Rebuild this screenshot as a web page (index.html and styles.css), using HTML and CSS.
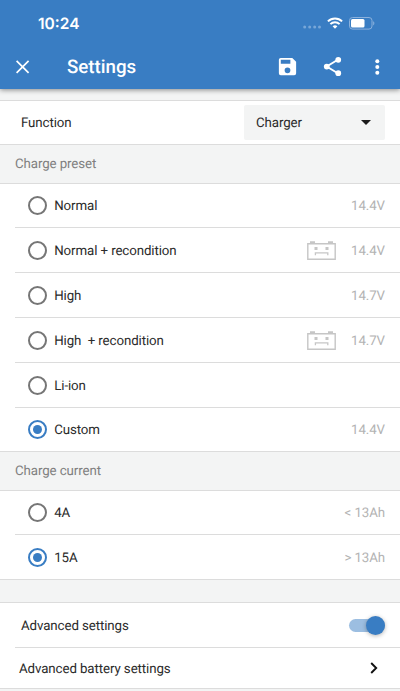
FILE: index.html
```html
<!DOCTYPE html>
<html lang="en">
<head>
<meta charset="utf-8">
<title>Settings</title>
<link rel="stylesheet" href="styles.css">
</head>
<body>
<header class="header">
  <div class="status">
    <span class="time">10:24</span>
    <svg class="signal" width="18" height="4" viewBox="0 0 18 4"><g fill="#78a7d8"><circle cx="1.7" cy="2" r="1.5"/><circle cx="6.7" cy="2" r="1.5"/><circle cx="11.7" cy="2" r="1.5"/><circle cx="16.5" cy="2" r="1.5"/></g></svg>
    <svg class="wifi" width="16" height="12" viewBox="0 0 16 12"><g fill="none" stroke="#fff" stroke-width="2"><path d="M.9 4.4a10.2 10.2 0 0 1 14.2 0"/><path d="M3.4 7.1a6.6 6.6 0 0 1 9.2 0"/></g><path d="M5.6 9.3a3.5 3.5 0 0 1 4.8 0L8 11.8z" fill="#fff"/></svg>
    <svg class="battery" width="26" height="13" viewBox="0 0 26 13"><rect x=".5" y=".5" width="22.5" height="11.6" rx="3" fill="none" stroke="#8bb1dc"/><rect x="2" y="2" width="13.5" height="8.6" rx="1.5" fill="#fff"/><path d="M24.2 4.2c1.6.7 1.6 3.5 0 4.2z" fill="#8bb1dc"/></svg>
  </div>
  <div class="toolbar">
    <svg class="close" width="14" height="14" viewBox="0 0 14 14"><path d="M.6 .8l12 12M12.600 .8l-12 12" stroke="#fff" stroke-width="1.7"/></svg>
    <h1 class="title">Settings</h1>
    <svg class="save" width="23" height="23" viewBox="0 0 24 24"><path fill="#fff" d="M17 3H5a2 2 0 0 0-2 2v14a2 2 0 0 0 2 2h14a2 2 0 0 0 2-2V7l-4-4zm-5 16a3 3 0 1 1 0-6 3 3 0 0 1 0 6zm3-10H5V5h10v4z"/></svg>
    <svg class="share" width="23" height="23" viewBox="0 0 24 24"><path d="M17.500 5L6 12l11.500 7" fill="none" stroke="#fff" stroke-width="2"/><g fill="#fff"><circle cx="18" cy="5" r="3"/><circle cx="6" cy="12" r="3"/><circle cx="18" cy="19" r="3"/></g></svg>
    <svg class="more" width="6" height="18" viewBox="0 0 6 18"><g fill="#fff"><circle cx="3.300" cy="3.300" r="2"/><circle cx="3.300" cy="9" r="2"/><circle cx="3.300" cy="14.700" r="2"/></g></svg>
  </div>
</header>
<main>
  <div class="row function"><span class="label">Function</span><div class="select"><span>Charger</span><svg width="10" height="5" viewBox="0 0 10 5"><path d="M0 0h10L5 5z" fill="#1b1b1b"/></svg></div></div>
  <h2 class="section">Charge preset</h2>
  <div class="list">
    <div class="row option first"><i class="radio"></i><span class="label">Normal</span><span class="value">14.4V</span></div>
    <div class="row option"><i class="radio"></i><span class="label">Normal + recondition</span><svg class="sad" width="29" height="19" viewBox="0 0 29 19"><g fill="none" stroke="#c6c6c6"><path stroke-width="1.4" d="M.8 2.700h27.400v15.500H.8z"/><path stroke-width="1.3" d="M8.400 14.200v-2.400h12.400v2.400"/></g><path fill="#c6c6c6" d="M3 .2h5v2H3zM21 .2h5v2h-5zM7.500 6h3v3h-3zM18.500 6h3v3h-3z"/></svg><span class="value">14.4V</span></div>
    <div class="row option"><i class="radio"></i><span class="label">High</span><span class="value">14.7V</span></div>
    <div class="row option"><i class="radio"></i><span class="label">High&nbsp; + recondition</span><svg class="sad" width="29" height="19" viewBox="0 0 29 19"><g fill="none" stroke="#c6c6c6"><path stroke-width="1.4" d="M.8 2.700h27.400v15.500H.8z"/><path stroke-width="1.3" d="M8.400 14.200v-2.400h12.400v2.400"/></g><path fill="#c6c6c6" d="M3 .2h5v2H3zM21 .2h5v2h-5zM7.500 6h3v3h-3zM18.500 6h3v3h-3z"/></svg><span class="value">14.7V</span></div>
    <div class="row option"><i class="radio"></i><span class="label">Li-ion</span></div>
    <div class="row option last"><i class="radio checked"></i><span class="label">Custom</span><span class="value">14.4V</span></div>
  </div>
  <h2 class="section">Charge current</h2>
  <div class="list">
    <div class="row option first"><i class="radio"></i><span class="label">4A</span><span class="value">&lt; 13Ah</span></div>
    <div class="row option"><i class="radio checked"></i><span class="label">15A</span><span class="value">&gt; 13Ah</span></div>
  </div>
  <div class="spacer"></div>
  <div class="list">
    <div class="row advanced first"><span class="label">Advanced settings</span><span class="switch"><i class="knob"></i></span></div>
    <div class="row link"><span class="label">Advanced battery settings</span><svg width="8" height="12" viewBox="0 0 8 12"><path d="M1.200 1L6.200 6l-5 5" fill="none" stroke="#111" stroke-width="1.9"/></svg></div>
  </div>
  <div class="end"></div>
</main>
</body>
</html>
```
FILE: styles.css
```css
* { box-sizing: border-box; }
body {
  margin: 0;
  height: 691px;
  overflow: hidden;
  background: #f3f4f4;
  color: #2b2b2b;
  font: 13.3px/18px Roboto, sans-serif;
  letter-spacing: -.1px;
  text-rendering: geometricPrecision;
}
svg { display: block; flex: none; }
.header {
  height: 89px;
  background: #397dc3;
  color: #fff;
  box-shadow: 0 1px 5px rgba(0, 0, 0, .45);
}
.status {
  display: flex;
  align-items: center;
  height: 46px;
  padding: 0 25px 0 38px;
}
.time {
  flex: 1;
  padding-top: 1px;
  font: 600 15.5px/20px Inter, sans-serif;
  letter-spacing: 0;
}
.signal { margin: 8px 6px 0 0; }
.wifi { margin-right: 6px; }
.toolbar {
  display: flex;
  align-items: center;
  height: 41px;
  padding: 0 20px 0 16px;
}
.title {
  flex: 1;
  margin: 0 0 0 37px;
  font-size: 18.7px;
  line-height: 24px;
  font-weight: 500;
  letter-spacing: 0;
}
.save { margin-right: 22px; }
.share { margin-right: 30px; }
main { padding-top: 11px; }
.row {
  display: flex;
  align-items: center;
  height: 45px;
  border-top: 1px solid #dcdcdc;
  background: #fff;
}
.label { flex: 1; white-space: pre; }
.label, .value { padding-top: 3px; }
.function { height: 44px; padding: 0 15px 0 21px; }
.select {
  display: flex;
  align-items: center;
  justify-content: space-between;
  width: 141px;
  height: 35px;
  padding: 0 14px 0 12px;
  border-radius: 2px;
  background: #f3f4f4;
}
.select span { padding-top: 2px; }
.section {
  height: 39px;
  margin: 0;
  padding: 0 15px;
  border-top: 1px solid #dcdcdc;
  font-size: inherit;
  font-weight: 400;
  line-height: 40px;
  color: #808080;
}
.list { border-top: 1px solid #dcdcdc; background: #fff; }
.option { margin-left: 15px; padding: 0 15px 0 13px; }
.first { height: 43px; border-top: 0; }
.last { height: 44px; }
.radio {
  display: flex;
  flex: none;
  align-items: center;
  justify-content: center;
  width: 19px;
  height: 19px;
  margin-right: 7.2px;
  border: 2px solid #767676;
  border-radius: 50%;
}
.checked { border-color: #397dc3; }
.checked::before {
  content: "";
  width: 9px;
  height: 9px;
  border-radius: 50%;
  background: #397dc3;
}
.value { color: #b3b3b3; }
.sad { margin-right: 15px; }
.spacer { height: 23px; border-top: 1px solid #dcdcdc; }
.advanced { padding: 0 15px 0 21px; height: 44px; }
.switch {
  display: flex;
  align-items: center;
  justify-content: flex-end;
  width: 36px;
  height: 13px;
  border-radius: 7px;
  background: #9cbee1;
}
.knob {
  flex: none;
  width: 19px;
  height: 19px;
  border-radius: 50%;
  background: #397dc3;
  box-shadow: 0 1px 4px rgba(0, 0, 0, .3);
}
.link { height: 41px; margin-left: 15px; padding: 0 22px 0 4px; }
.end { border-top: 1px solid #dcdcdc; }
```
